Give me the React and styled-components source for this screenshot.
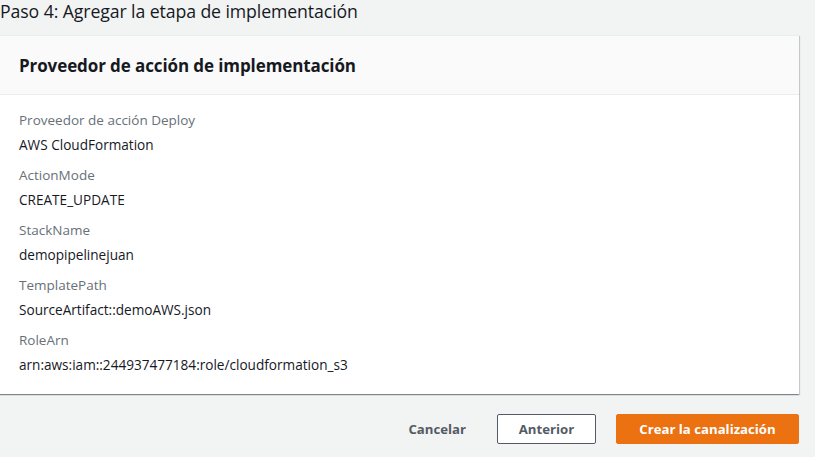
import React from "react";
import styled, { createGlobalStyle } from "styled-components";

const Global = createGlobalStyle`
  html, body { margin: 0; padding: 0; background: #f2f3f3; }
  body { font-family: "Open Sans", "Noto Sans", Arial, sans-serif; color: #16191f; }
`;

const Page = styled.div`
  width: 815px;
  height: 457px;
  overflow: hidden;
  box-sizing: border-box;
  padding: 1px 16px 0 0;
  display: flex;
  flex-direction: column;
`;

const StepTitle = styled.h1`
  margin: 0;
  font-size: 17.7px;
  line-height: 20px;
  font-weight: 400;
  color: #16191f;
  letter-spacing: -0.1px;
`;

const Card = styled.section`
  margin-top: 14px;
  margin-left: -1px;
  background: #fff;
  border-top: 1px solid #eaeded;
  box-shadow: 0 1px 1px 0 rgba(0, 28, 36, 0.3), 1px 1px 1px 0 rgba(0, 28, 36, 0.15),
    -1px 1px 1px 0 rgba(0, 28, 36, 0.15);
`;

const CardHeader = styled.header`
  background: #fafafa;
  border-bottom: 1px solid #eaeded;
  padding: 0 20px;
  height: 58px;
  display: flex;
  align-items: center;
`;

const CardTitle = styled.h2`
  margin: 0;
  font-size: 17px;
  font-weight: 700;
  color: #16191f;
  letter-spacing: -0.1px;
`;

const CardBody = styled.div`
  padding: 15px 20px 19px 20px;
  display: flex;
  flex-direction: column;
  gap: 10px;
`;

const Pair = styled.div`
  display: flex;
  flex-direction: column;
  gap: 5px;
`;

const Label = styled.div`
  font-size: 13.5px;
  line-height: 20px;
  color: #687078;
`;

const Value = styled.div`
  font-size: 13.6px;
  line-height: 20px;
  color: #16191f;
`;

const Actions = styled.div`
  margin-top: 20px;
  display: flex;
  justify-content: flex-end;
  align-items: center;
`;

const Button = styled.button`
  font-family: inherit;
  font-size: 13.2px;
  font-weight: 700;
  height: 30px;
  box-sizing: border-box;
  padding: 0 20px;
  border-radius: 2px;
  cursor: pointer;
  border: 1px solid ${(p) => (p.$variant === "primary" ? "#ec7211" : p.$variant === "normal" ? "#545b64" : "transparent")};
  background: ${(p) => (p.$variant === "primary" ? "#ec7211" : p.$variant === "normal" ? "#fff" : "transparent")};
  color: ${(p) => (p.$variant === "primary" ? "#fff" : "#545b64")};
  margin-left: ${(p) => p.$gap || 0}px;
  min-width: ${(p) => p.$minWidth || 0}px;
`;

const items = [
  ["Proveedor de acción Deploy", "AWS CloudFormation"],
  ["ActionMode", "CREATE_UPDATE"],
  ["StackName", "demopipelinejuan"],
  ["TemplatePath", "SourceArtifact::demoAWS.json"],
  ["RoleArn", "arn:aws:iam::244937477184:role/cloudformation_s3"],
];

export default function App() {
  return (
    <>
      <Global />
      <Page>
        <StepTitle>Paso 4: Agregar la etapa de implementación</StepTitle>
        <Card>
          <CardHeader>
            <CardTitle>Proveedor de acción de implementación</CardTitle>
          </CardHeader>
          <CardBody>
            {items.map(([k, v]) => (
              <Pair key={k}>
                <Label>{k}</Label>
                <Value>{v}</Value>
              </Pair>
            ))}
          </CardBody>
        </Card>
        <Actions>
          <Button $variant="link">Cancelar</Button>
          <Button $variant="normal" $gap={10} $minWidth={99}>Anterior</Button>
          <Button $variant="primary" $gap={20} $minWidth={183}>Crear la canalización</Button>
        </Actions>
      </Page>
    </>
  );
}
